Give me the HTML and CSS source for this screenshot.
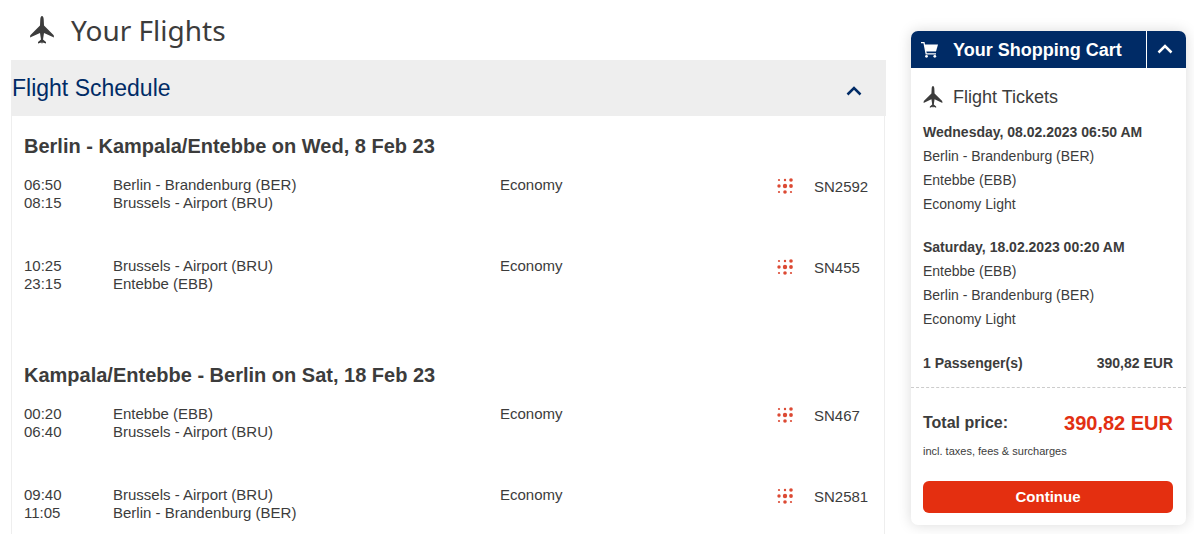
FILE: index.html
```html
<!DOCTYPE html>
<html lang="en">
<head>
<meta charset="utf-8">
<meta name="viewport" content="width=device-width, initial-scale=1">
<title>Your Flights</title>
<link rel="stylesheet" href="styles.css">
</head>
<body>
<svg class="defs" aria-hidden="true">
  <symbol id="plane" viewBox="0 0 24 28">
    <path d="M12 0C11 0 10.4 1.6 10.3 3.2L10 9.6L0.3 19.2L0 21.6L10 16.9L11 23.4L8 26V27.6L11.4 26.4L12 28L12.6 26.4L16 27.6V26L13 23.4L14 16.9L24 21.6L23.7 19.2L14 9.6L13.7 3.2C13.6 1.6 13 0 12 0Z"/>
  </symbol>
  <symbol id="dots" viewBox="0 0 16 16">
    <circle cx="2" cy="2" r="1.1"/><circle cx="8" cy="2" r="1.2"/><circle cx="14" cy="2" r="1.8"/>
    <circle cx="2" cy="8" r="1.7"/><circle cx="8" cy="8" r="2.2"/><circle cx="14" cy="8" r="1.9"/>
    <circle cx="2" cy="14" r="1.1"/><circle cx="8" cy="14" r="1.8"/><circle cx="14" cy="14" r="1.1"/>
  </symbol>
  <symbol id="chevron" viewBox="0 0 16 10">
    <path d="M1.5 8.5L8 2L14.5 8.5" fill="none" stroke="currentColor" stroke-width="2.5"/>
  </symbol>
</svg>
<div class="page">
  <main class="main">
    <h1 class="title"><svg class="title-icon"><use href="#plane"/></svg>Your Flights</h1>
    <div class="panel-head">
      <h2 class="panel-title">Flight Schedule</h2>
      <button class="toggle" type="button" aria-label="Collapse flight schedule"><svg class="chevron"><use href="#chevron"/></svg></button>
    </div>
    <div class="panel">
      <section class="journey">
        <h3 class="journey-title">Berlin - Kampala/Entebbe on Wed, 8 Feb 23</h3>
        <table class="legs">
          <tr><td class="time">06:50<br>08:15</td><td class="route">Berlin - Brandenburg (BER)<br>Brussels - Airport (BRU)</td><td class="cabin">Economy</td><td class="flight"><span class="carrier"><svg class="dots"><use href="#dots"/></svg>SN2592</span></td></tr>
          <tr><td class="time">10:25<br>23:15</td><td class="route">Brussels - Airport (BRU)<br>Entebbe (EBB)</td><td class="cabin">Economy</td><td class="flight"><span class="carrier"><svg class="dots"><use href="#dots"/></svg>SN455</span></td></tr>
        </table>
      </section>
      <section class="journey">
        <h3 class="journey-title">Kampala/Entebbe - Berlin on Sat, 18 Feb 23</h3>
        <table class="legs">
          <tr><td class="time">00:20<br>06:40</td><td class="route">Entebbe (EBB)<br>Brussels - Airport (BRU)</td><td class="cabin">Economy</td><td class="flight"><span class="carrier"><svg class="dots"><use href="#dots"/></svg>SN467</span></td></tr>
          <tr><td class="time">09:40<br>11:05</td><td class="route">Brussels - Airport (BRU)<br>Berlin - Brandenburg (BER)</td><td class="cabin">Economy</td><td class="flight"><span class="carrier"><svg class="dots"><use href="#dots"/></svg>SN2581</span></td></tr>
        </table>
      </section>
    </div>
  </main>
  <aside class="cart">
    <div class="cart-head">
      <svg class="cart-icon" viewBox="0 0 17 16"><path d="M0 0.7H3L5.2 11.8H15" fill="none" stroke="currentColor" stroke-width="1.3"/><path d="M3.4 2.6H17L15 9.5H4.7Z" fill="currentColor"/><circle cx="5.5" cy="14.3" r="1.4" fill="currentColor"/><circle cx="13.8" cy="14.3" r="1.4" fill="currentColor"/></svg>
      <h2 class="cart-title">Your Shopping Cart</h2>
      <button class="cart-toggle" type="button" aria-label="Collapse shopping cart"><svg class="chevron"><use href="#chevron"/></svg></button>
    </div>
    <div class="cart-body">
      <h3 class="tickets"><svg class="tickets-icon"><use href="#plane"/></svg>Flight Tickets</h3>
      <div class="ticket"><strong class="date">Wednesday, 08.02.2023 06:50 AM</strong>Berlin - Brandenburg (BER)<br>Entebbe (EBB)<br>Economy Light</div>
      <div class="ticket"><strong class="date">Saturday, 18.02.2023 00:20 AM</strong>Entebbe (EBB)<br>Berlin - Brandenburg (BER)<br>Economy Light</div>
      <div class="passengers"><span>1 Passenger(s)</span><span>390,82 EUR</span></div>
    </div>
    <div class="cart-total">
      <div class="total"><span>Total price:</span><span class="amount">390,82 EUR</span></div>
      <p class="note">incl. taxes, fees &amp; surcharges</p>
      <button class="continue" type="button">Continue</button>
    </div>
  </aside>
</div>
</body>
</html>
```
FILE: styles.css
```css
* { box-sizing: border-box; }
body {
  margin: 0;
  background: #fff;
  color: #3c3c3c;
  font: 14px/18px "Liberation Sans", Arial, sans-serif;
}
h1, h2, h3, p { margin: 0; font-weight: normal; }
button { border: 0; padding: 0; background: none; color: inherit; font: inherit; cursor: pointer; }
svg { display: block; flex: none; fill: currentColor; }
.defs { position: absolute; width: 0; height: 0; }
.page { display: flex; align-items: flex-start; gap: 25px; min-height: 100vh; padding: 0 8px 0 11px; }
.main { display: flex; flex-direction: column; flex: 1; align-self: stretch; }
.title {
  display: flex;
  align-items: center;
  gap: 17px;
  height: 60px;
  padding-left: 19px;
  font: 28px/40px "Noto Sans", sans-serif;
}
.title-icon { width: 24px; height: 28px; }
.panel-head {
  display: flex;
  align-items: center;
  justify-content: space-between;
  height: 56px;
  padding: 0 24px 0 1px;
  background: #eee;
  color: #002b66;
}
.panel-title { font-size: 23px; line-height: 28px; }
.toggle { padding-top: 6px; }
.chevron { width: 16px; height: 10px; }
.panel {
  flex: 1;
  display: flex;
  flex-direction: column;
  gap: 24px;
  margin-right: 1px;
  padding: 18px 12px 0;
  border: solid #eee;
  border-width: 0 1px;
}
.journey-title { font-size: 20px; line-height: 24px; font-weight: bold; margin-bottom: 18px; }
.legs { width: 100%; border-collapse: collapse; table-layout: fixed; font-size: 15px; }
.legs td { padding: 0 0 45px; vertical-align: top; }
.journey:first-child tr:last-child td { padding-bottom: 46px; }
.journey:last-child tr:last-child td { padding-bottom: 0; }
.legs .time { width: 89px; }
.legs .cabin { width: 277px; }
.legs .flight { width: 95px; padding-top: 2px; }
.carrier { display: flex; gap: 21px; }
.dots { width: 16px; height: 16px; color: #dc4a34; }
.cart { width: 275px; margin-top: 31px; border-radius: 7px; background: #fff; box-shadow: 0 0 14px rgba(0, 0, 0, .15); }
.cart-head {
  display: flex;
  align-items: center;
  height: 37px;
  padding-left: 10px;
  border-radius: 7px 7px 0 0;
  background: #002b66;
  color: #fff;
}
.cart-icon { width: 17px; height: 16px; }
.cart-title { flex: 1; padding-left: 15px; font-size: 18px; line-height: 24px; font-weight: bold; }
.cart-toggle { display: flex; align-items: center; justify-content: center; align-self: stretch; width: 40px; padding: 0 3px 2px 0; border-left: 1px solid #fff; }
.cart-body { display: flex; flex-direction: column; gap: 20px; padding: 17px 13px 12px 12px; border-bottom: 1px dashed #ccc; line-height: 24px; }
.tickets { display: flex; align-items: center; gap: 10px; margin-bottom: -8px; font-size: 18px; line-height: 24px; }
.tickets-icon { width: 20px; height: 22px; }
.date { display: block; line-height: 23px; }
.passengers { display: flex; justify-content: space-between; font-weight: bold; }
.cart-total { padding: 22px 13px 12px 12px; }
.total { display: flex; align-items: center; justify-content: space-between; font-size: 16px; line-height: 26px; font-weight: bold; }
.amount { color: #e23012; font-size: 20px; }
.note { margin: 6px 0 21px; font-size: 11px; line-height: 18px; }
.continue { width: 100%; height: 32px; border-radius: 6px; background: #e42f10; color: #fff; font-size: 15px; font-weight: bold; }
```
